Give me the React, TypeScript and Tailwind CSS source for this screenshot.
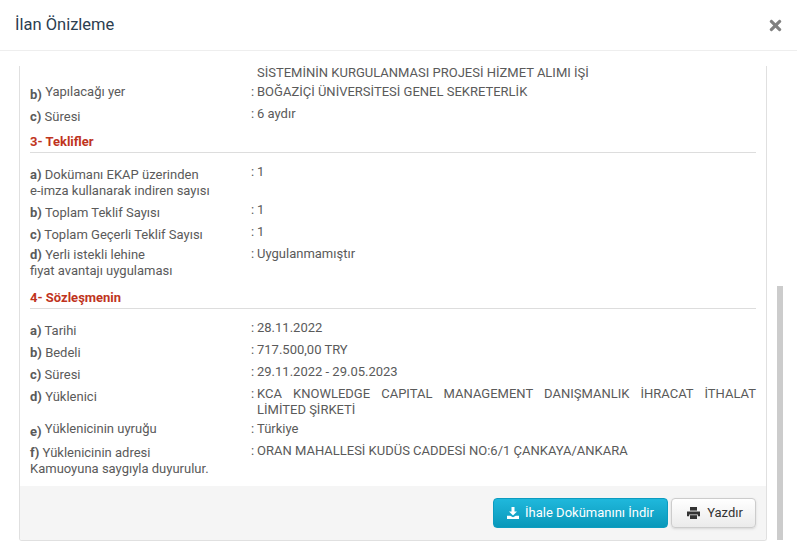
import { FaTimes } from 'react-icons/fa';

type RowProps = {
  letter?: string;
  label?: React.ReactNode;
  value?: React.ReactNode;
  labelTop?: string;
  rowClass?: string;
  raised?: boolean;
  noColon?: boolean;
};

const Row = ({ letter, label, value, labelTop = 'pt-[3px]', rowClass = 'h-[22px]', raised, noColon }: RowProps) => (
  <div className={`grid grid-cols-[221px_1fr] ${rowClass}`}>
    <div className={labelTop}>
      {letter && <b className={raised ? 'font-bold align-[-3px]' : 'font-bold'}>{letter}</b>} {label}
    </div>
    <div className="flex">
      <span className="w-[6px] shrink-0">{noColon ? '' : ':'}</span>
      <div className="flex-1 text-justify">{value}</div>
    </div>
  </div>
);

const Section = ({ title }: { title: string }) => (
  <div className="mb-[11px] h-[19px] border-b border-[#dddddd] font-bold leading-[16px] text-[#c0341d]">{title}</div>
);

const DownloadIcon = () => (
  <svg viewBox="0 0 12 12" className="h-[12px] w-[12px]" fill="currentColor">
    <path d="M4.5 0h3v4.6H10L6 8.4 2 4.6h2.5z" />
    <path d="M0 8.8h3.2L6 10.2l2.8-1.4H12V12H0z" />
  </svg>
);

const PrintIcon = () => (
  <svg viewBox="0 0 13 12" className="h-[12px] w-[13px]" fill="currentColor">
    <path d="M3 0h7v3.6H3z" />
    <path d="M0 4.4h13v4.8h-2.2V7.4H2.2v1.8H0z" />
    <path d="M3 8.2h7V12H3z" />
  </svg>
);

export default function App() {
  return (
    <div className="h-[560px] w-[797px] overflow-hidden bg-white font-['Roboto',sans-serif] text-[13px] leading-[16px] text-[#5a5a5a]">
      <div className="flex h-[51px] items-center justify-between border-b border-[#eeeeee] pl-[15px] pr-[13px]">
        <h4 className="text-[16.5px] text-[#2c3e50]">İlan Önizleme</h4>
        <FaTimes className="text-[17px] text-[#808080]" />
      </div>

      <div className="relative">
        <div className="ml-[19px] mt-[15px] h-[475px] w-[748px] overflow-hidden rounded-b-[3px] border-x border-b border-[#e0e0e0]">
          <div className="h-[420px] overflow-hidden px-[10px]">
            <Row noColon value="SİSTEMİNİN KURGULANMASI PROJESİ HİZMET ALIMI İŞİ" rowClass="h-[18px] leading-[14px]" />
            <Row letter="b)" raised label="Yapılacağı yer" value="BOĞAZİÇİ ÜNİVERSİTESİ GENEL SEKRETERLİK" labelTop="pt-0" />
            <Row letter="c)" label="Süresi" value="6 aydır" rowClass="h-[28px]" />
            <Section title="3- Teklifler" />
            <Row
              letter="a)"
              label={<>Dokümanı EKAP üzerinden<br />e-imza kullanarak indiren sayısı</>}
              value="1"
              rowClass="h-[38px]"
            />
            <Row letter="b)" label="Toplam Teklif Sayısı" value="1" />
            <Row letter="c)" label="Toplam Geçerli Teklif Sayısı" value="1" />
            <Row
              letter="d)"
              label={<>Yerli istekli lehine<br />fiyat avantajı uygulaması</>}
              value="Uygulanmamıştır"
              labelTop="pt-[1px]"
              rowClass="h-[44px]"
            />
            <Section title="4- Sözleşmenin" />
            <Row letter="a)" label="Tarihi" value="28.11.2022" />
            <Row letter="b)" label="Bedeli" value="717.500,00 TRY" />
            <Row letter="c)" label="Süresi" value="29.11.2022 - 29.05.2023" />
            <Row
              letter="d)"
              label="Yüklenici"
              value="KCA KNOWLEDGE CAPITAL MANAGEMENT DANIŞMANLIK İHRACAT İTHALAT LİMİTED ŞİRKETİ"
              rowClass="h-[35px]"
            />
            <Row letter="e)" raised label="Yüklenicinin uyruğu" value="Türkiye" labelTop="pt-0" />
            <Row
              letter="f)"
              label={<>Yüklenicinin adresi<br />Kamuoyuna saygıyla duyurulur.</>}
              value="ORAN MAHALLESİ KUDÜS CADDESİ NO:6/1 ÇANKAYA/ANKARA"
              labelTop="pt-[2px]"
              rowClass="h-[44px]"
            />
          </div>

          <div className="flex h-[54px] items-center justify-end gap-[3px] bg-[#f5f5f5] pr-[10px]">
            <button className="flex h-[30px] w-[175px] items-center justify-center gap-[6px] rounded-[4px] border border-[#0c9cc0] bg-gradient-to-b from-[#1fb8dc] to-[#0898ba] text-white">
              <DownloadIcon />
              İhale Dokümanını İndir
            </button>
            <button className="flex h-[30px] w-[85px] items-center justify-center gap-[7px] rounded-[4px] border border-[#cccccc] bg-gradient-to-b from-white to-[#ebebeb] pl-[3px] text-[#333333] shadow-sm">
              <PrintIcon />
              Yazdır
            </button>
          </div>
        </div>

        {/* scrollbar thumb */}
        <div className="absolute left-[777px] top-[220px] h-[254px] w-[6px] bg-[#cccccc]" />
      </div>
    </div>
  );
}
